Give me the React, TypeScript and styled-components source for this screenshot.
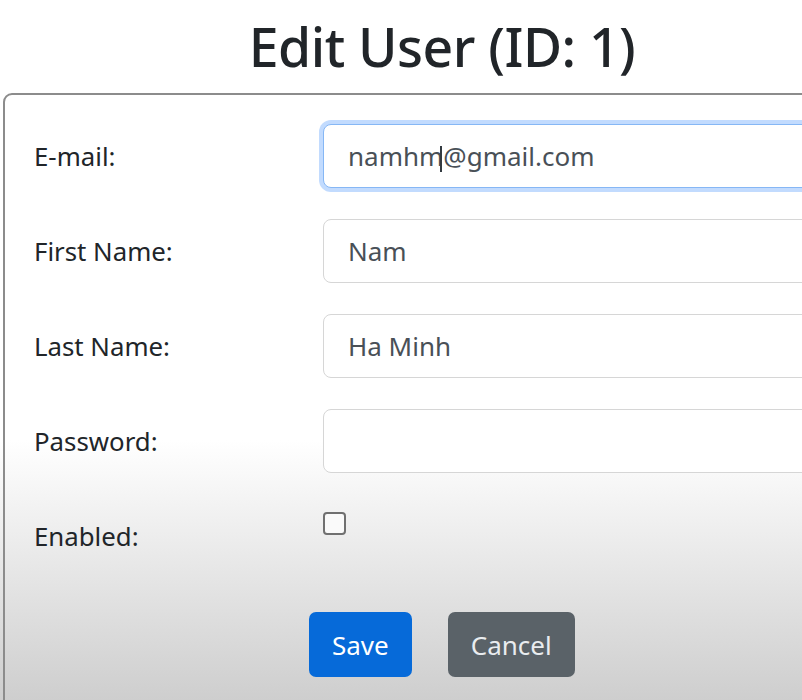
import styled, { createGlobalStyle, css } from "styled-components";

const GlobalStyle = createGlobalStyle`
  html, body {
    margin: 0;
    padding: 0;
  }
  body {
    min-height: 700px;
    overflow: hidden;
    font-family: "Noto Sans", "Open Sans", Arial, sans-serif;
    color: #212529;
    background: linear-gradient(to bottom, #ffffff 0px, #ffffff 440px, #cecece 700px);
  }
`;

interface IField {
  label: string;
  value: string;
  type: string;
  focused?: boolean;
}

const fields: IField[] = [
  { label: "E-mail:", value: "namhm@gmail.com", type: "email", focused: true },
  { label: "First Name:", value: "Nam", type: "text" },
  { label: "Last Name:", value: "Ha Minh", type: "text" },
  { label: "Password:", value: "", type: "password" },
];

export default function App() {
  return (
    <>
      <GlobalStyle />
      <PageLayout>
        <TitleArea>Edit User (ID: 1)</TitleArea>
        <FormCard>
          {fields.map((f) => (
            <FormRow key={f.label}>
              <FieldLabel>{f.label}</FieldLabel>
              <InputWrap>
                <TextInput
                  type={f.type}
                  defaultValue={f.value}
                  $focused={f.focused}
                  readOnly
                />
                {/* text caret frozen after "namhm" */}
                {f.focused && <Caret />}
              </InputWrap>
            </FormRow>
          ))}
          <FormRow>
            <FieldLabel>Enabled:</FieldLabel>
            <CheckCell>
              <CheckBox type="checkbox" />
            </CheckCell>
          </FormRow>
          <ButtonRow>
            <ActionButton $variant="primary">Save</ActionButton>
            <ActionButton $variant="secondary">Cancel</ActionButton>
          </ButtonRow>
        </FormCard>
      </PageLayout>
    </>
  );
}

const PageLayout = styled.div`
  display: flex;
  flex-direction: column;
  width: 802px;
  height: 700px;
  overflow: hidden;
`;

const TitleArea = styled.h1`
  margin: 0;
  padding: 14px 0 0 82px;
  height: 93px;
  flex-shrink: 0;
  box-sizing: border-box;
  text-align: center;
  font-size: 53.5px;
  font-weight: 500;
  line-height: 66px;
  color: #212529;
  letter-spacing: -0.5px;
`;

const FormCard = styled.div`
  display: flex;
  flex-direction: column;
  gap: 31px;
  margin-left: 3px;
  width: 1000px;
  flex-shrink: 0;
  padding: 29px 0 60px 29px;
  border: 2px solid #8c8c8c;
  border-radius: 9px;
  box-sizing: border-box;
`;

const FormRow = styled.div`
  display: grid;
  grid-template-columns: 289px 1fr;
  align-items: start;
  height: 64px;
`;

const FieldLabel = styled.label`
  display: flex;
  align-items: center;
  height: 64px;
  font-size: 25.8px;
  color: #212529;
`;

const InputWrap = styled.div`
  position: relative;
  display: flex;
`;

const TextInput = styled.input<{ $focused?: boolean }>`
  width: 600px;
  height: 64px;
  box-sizing: border-box;
  padding: 0 24px;
  border: 1.5px solid #d6d6d6;
  border-radius: 8px;
  background: #ffffff;
  font-family: "Noto Sans", "Open Sans", Arial, sans-serif;
  font-size: 26px;
  color: #495057;
  outline: none;

  ${({ $focused }) =>
    $focused &&
    css`
      border-color: #86b7f5;
      box-shadow: 0 0 0 4px rgba(13, 110, 253, 0.25);
    `}
`;

const Caret = styled.span`
  position: absolute;
  left: 117px;
  top: 22px;
  width: 2px;
  height: 26px;
  background: #333a40;
`;

const CheckCell = styled.div`
  display: flex;
  padding-top: 8px;
`;

const CheckBox = styled.input`
  appearance: none;
  margin: 0;
  width: 23px;
  height: 23px;
  border: 2px solid #707070;
  border-radius: 4px;
  background: #fafafa;
`;

const ButtonRow = styled.div`
  display: flex;
  gap: 36px;
  margin-top: 13px;
  padding-left: 275px;
`;

const ActionButton = styled.button<{ $variant: "primary" | "secondary" }>`
  height: 65px;
  padding: 0 23px;
  border: none;
  border-radius: 7px;
  font-family: "Noto Sans", "Open Sans", Arial, sans-serif;
  font-size: 26px;
  color: ${({ $variant }) => ($variant === "primary" ? "#ffffff" : "#e9ecef")};
  background: ${({ $variant }) => ($variant === "primary" ? "#066ad9" : "#5a6268")};
  cursor: pointer;
`;
